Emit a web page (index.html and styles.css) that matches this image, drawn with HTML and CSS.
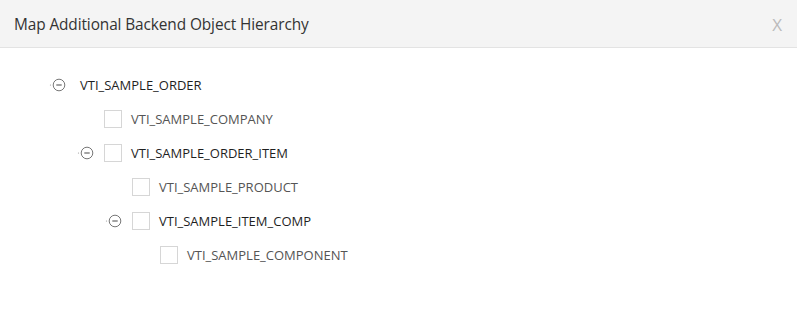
FILE: index.html
```html
<!DOCTYPE html>
<html lang="en">
	<head>
		<meta charset="UTF-8" />
		<meta name="viewport" content="width=device-width, initial-scale=1.0" />
		<title>Map Additional Backend Object Hierarchy</title>
		<link rel="stylesheet" href="styles.css">
	</head>
	<body>
		<div class="dialog">
			<div class="dialog-header">
				<span class="dialog-title">Map Additional Backend Object Hierarchy</span>
				<span class="dialog-close">X</span>
			</div>
			<div class="dialog-body">
				<ul class="tree">
					<li>
						<div class="node">
							<span class="toggle">
								<svg viewBox="0 0 17 14" width="17" height="14">
									<circle cx="1.5" cy="7" r="0.6" fill="#999" />
									<circle cx="10" cy="7" r="5.8" fill="none" stroke="#777" stroke-width="1" />
									<line x1="7.3" y1="7" x2="12.7" y2="7" stroke="#666" stroke-width="1.2" />
								</svg>
							</span>
							<span class="label parent root">VTI_SAMPLE_ORDER</span>
						</div>
						<ul class="tree">
							<li>
								<div class="node">
									<span class="toggle"></span>
									<span class="check"></span>
									<span class="label">VTI_SAMPLE_COMPANY</span>
								</div>
							</li>
							<li>
								<div class="node">
									<span class="toggle">
										<svg viewBox="0 0 17 14" width="17" height="14">
											<circle cx="1.5" cy="7" r="0.6" fill="#999" />
											<circle cx="10" cy="7" r="5.8" fill="none" stroke="#777" stroke-width="1" />
											<line x1="7.3" y1="7" x2="12.7" y2="7" stroke="#666" stroke-width="1.2" />
										</svg>
									</span>
									<span class="check"></span>
									<span class="label parent">VTI_SAMPLE_ORDER_ITEM</span>
								</div>
								<ul class="tree">
									<li>
										<div class="node">
											<span class="toggle"></span>
											<span class="check"></span>
											<span class="label">VTI_SAMPLE_PRODUCT</span>
										</div>
									</li>
									<li>
										<div class="node">
											<span class="toggle">
												<svg viewBox="0 0 17 14" width="17" height="14">
													<circle cx="1.5" cy="7" r="0.6" fill="#999" />
													<circle cx="10" cy="7" r="5.8" fill="none" stroke="#777" stroke-width="1" />
													<line x1="7.3" y1="7" x2="12.7" y2="7" stroke="#666" stroke-width="1.2" />
												</svg>
											</span>
											<span class="check"></span>
											<span class="label parent">VTI_SAMPLE_ITEM_COMP</span>
										</div>
										<ul class="tree">
											<li>
												<div class="node">
													<span class="toggle"></span>
													<span class="check"></span>
													<span class="label">VTI_SAMPLE_COMPONENT</span>
												</div>
											</li>
										</ul>
									</li>
								</ul>
							</li>
						</ul>
					</li>
				</ul>
			</div>
		</div>
	</body>
</html>
```
FILE: styles.css
```css
html,
body {
	margin: 0;
	padding: 0;
	background: #fff;
	font-family: "Open Sans", "Noto Sans", sans-serif;
}
.dialog {
	width: 797px;
	height: 329px;
	background: #fff;
}
.dialog-header {
	display: flex;
	align-items: center;
	justify-content: space-between;
	height: 47px;
	padding: 0 14px;
	background: #f4f4f4;
	border-bottom: 1px solid #e3e3e3;
}
.dialog-title {
	font-size: 15.4px;
	color: #333;
	letter-spacing: -0.1px;
	margin-top: 1px;
}
.dialog-close {
	font-size: 17px;
	color: #bbb;
	margin-right: 1px;
	margin-top: 2px;
}
.dialog-body {
	padding: 20px 0 0 49px;
}
.tree {
	list-style: none;
	margin: 0;
	padding: 0;
}
.tree .tree {
	padding-left: 28px;
}
.node {
	display: flex;
	align-items: center;
	height: 34px;
}
.toggle {
	display: flex;
	align-items: center;
	width: 29px;
	height: 14px;
	flex-shrink: 0;
}
.check {
	width: 16px;
	height: 16px;
	border: 1px solid #d6d6d6;
	background: #fff;
	margin-left: -2px;
	margin-right: 9px;
	flex-shrink: 0;
}
.label {
	font-size: 13px;
	color: #555;
}
.label.parent {
	color: #1f1f1f;
}
.label.root {
	margin-left: 2px;
}
```
